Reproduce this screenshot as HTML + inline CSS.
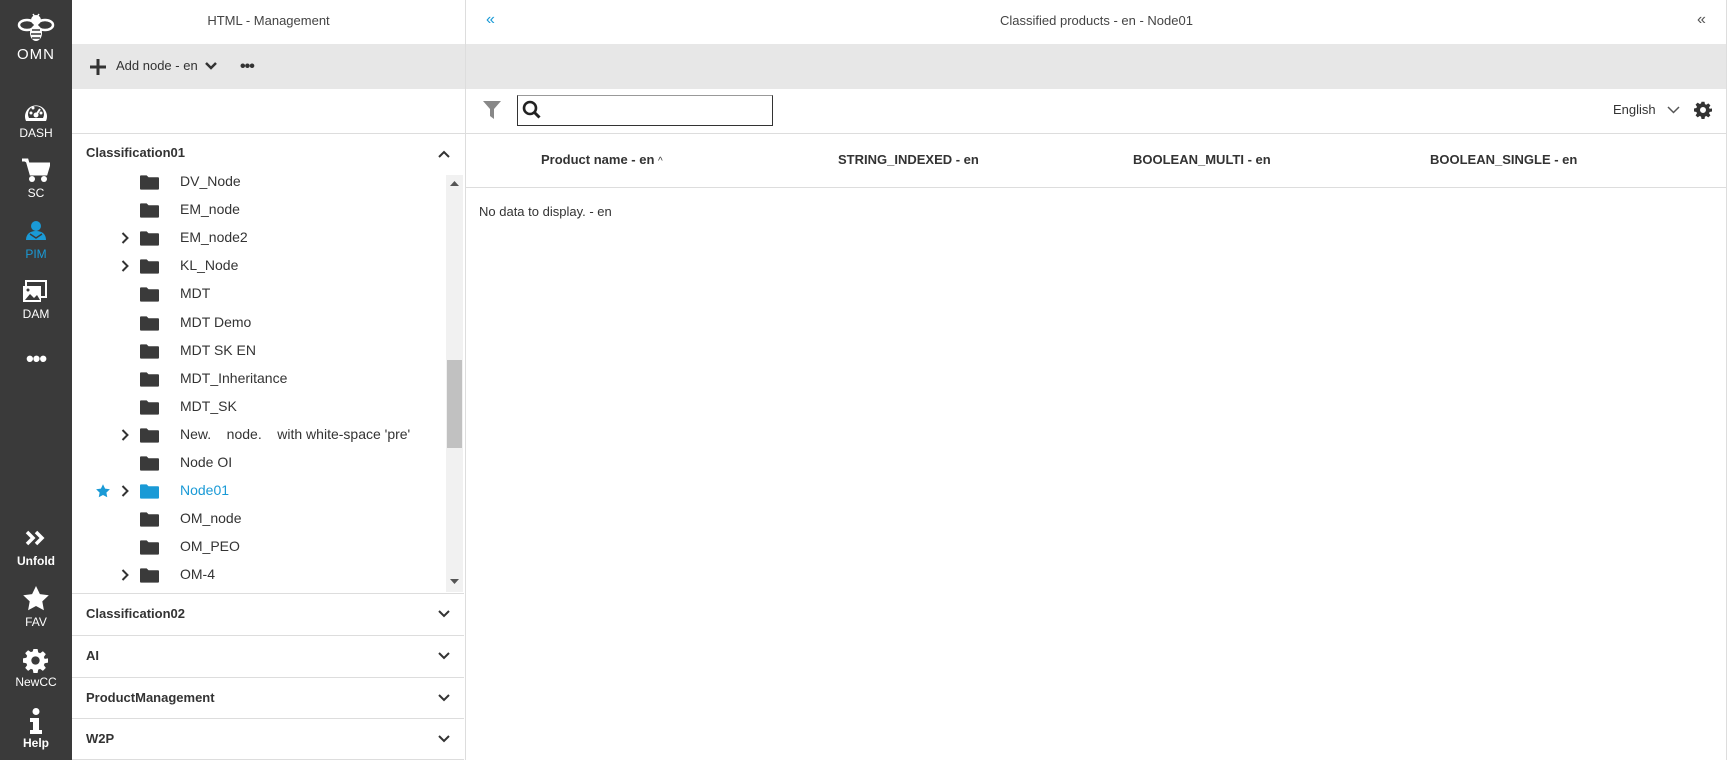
<!DOCTYPE html>
<html><head><style>
*{margin:0;padding:0;box-sizing:border-box}
body{width:1727px;height:760px;overflow:hidden;font-family:"Liberation Sans",sans-serif;background:#fff;position:relative;color:#333}
.abs{position:absolute}
#side{left:0;top:0;width:72px;height:760px;background:#3a3a3a}
.lbl{position:absolute;left:0;width:72px;text-align:center;color:#fff;font-size:12px}
.acc{position:absolute;left:72px;width:392px;border-top:1px solid #ddd;font-weight:bold;font-size:14px;color:#333}
</style></head><body>
<div id="side" class="abs"></div>
<svg width="0" height="0" style="position:absolute"><defs><symbol id="gear" viewBox="0 0 24 24"><path fill="currentColor" d="M10 1h4l.6 3.2 1.8.8 2.7-1.9 2.8 2.8-1.9 2.7.8 1.8L24 10v4l-3.2.6-.8 1.8 1.9 2.7-2.8 2.8-2.7-1.9-1.8.8L14 24h-4l-.6-3.2-1.8-.8-2.7 1.9-2.8-2.8 1.9-2.7-.8-1.8L0 14v-4l3.2-.6.8-1.8-1.9-2.7 2.8-2.8 2.7 1.9 1.8-.8zM12 8a4 4 0 1 0 0 8 4 4 0 1 0 0-8z"/></symbol></defs></svg>
<svg class="abs" style="left:17px;top:13px" width="38" height="32" viewBox="0 0 38 32"><g fill="#fff"><circle cx="19" cy="7" r="5"/><ellipse cx="10" cy="12" rx="8" ry="5" fill="none" stroke="#fff" stroke-width="2.5"/><ellipse cx="28" cy="12" rx="8" ry="5" fill="none" stroke="#fff" stroke-width="2.5"/><ellipse cx="19" cy="20" rx="6" ry="8"/><path d="M15 17h8M14 21h10M15 25h8" stroke="#3a3a3a" stroke-width="1.5"/><path d="M16 1l2 3M22 1l-2 3" stroke="#fff" stroke-width="1.5"/></g></svg>
<div class="lbl" style="top:46px;font-size:15px;letter-spacing:1px">OMN</div>
<svg class="abs" style="left:23px;top:100px" width="26" height="22" viewBox="0 0 26 22"><path d="M3 21 A11 11 0 1 1 23 21 Z" fill="#fff"/><path d="M6 18 A8 8 0 1 1 20 18 Z" fill="#3a3a3a"/><circle cx="13" cy="15" r="2.5" fill="#fff"/><path d="M13 15l4-6" stroke="#fff" stroke-width="2"/><circle cx="8" cy="13" r="1.5" fill="#fff"/><circle cx="10" cy="8" r="1.5" fill="#fff"/><circle cx="18" cy="13" r="1.5" fill="#fff"/></svg>
<div class="lbl" style="top:126px">DASH</div>
<svg class="abs" style="left:22px;top:158px" width="28" height="25" viewBox="0 0 28 25"><path d="M0 2h5l4 14h15l3-10H7" fill="#fff" stroke="#fff" stroke-width="3"/><circle cx="10" cy="21" r="3" fill="#fff"/><circle cx="22" cy="21" r="3" fill="#fff"/></svg>
<div class="lbl" style="top:186px">SC</div>
<svg class="abs" style="left:24px;top:220px" width="24" height="22" viewBox="0 0 24 22"><circle cx="12" cy="6" r="5" fill="#1a9ad6"/><path d="M2 20c0-6 4-9 10-9s10 3 10 9z" fill="#1a9ad6"/><path d="M6 14l6 4 6-4" stroke="#3a3a3a" stroke-width="1.5" fill="none"/></svg>
<div class="lbl" style="top:247px;color:#1a9ad6">PIM</div>
<svg class="abs" style="left:22px;top:280px" width="26" height="24" viewBox="0 0 26 24"><rect x="4" y="1" width="20" height="16" fill="none" stroke="#fff" stroke-width="2"/><rect x="1" y="6" width="18" height="16" fill="#fff"/><path d="M3 20l5-6 4 4 3-3 3 5z" fill="#3a3a3a"/><circle cx="6" cy="10" r="1.5" fill="#3a3a3a"/></svg>
<div class="lbl" style="top:307px">DAM</div>
<div class="lbl" style="top:346px;font-size:22px;font-weight:bold;letter-spacing:-1px">•••</div>
<svg class="abs" style="left:25px;top:530px" width="22" height="16" viewBox="0 0 22 16"><path d="M2 2l6 6-6 6M11 2l6 6-6 6" stroke="#fff" stroke-width="3.5" fill="none"/></svg>
<div class="lbl" style="top:554px;font-weight:bold">Unfold</div>
<svg class="abs" style="left:23px;top:586px" width="26" height="25" viewBox="0 0 24 23"><path d="M12 0l3.6 7.5 8.2 1-6 5.7 1.5 8.1L12 18.4l-7.3 3.9 1.5-8.1-6-5.7 8.2-1z" fill="#fff"/></svg>
<div class="lbl" style="top:615px">FAV</div>
<svg class="abs" style="left:23px;top:648px;color:#fff" width="25" height="25"><use href="#gear"/></svg>
<div class="lbl" style="top:675px">NewCC</div>
<svg class="abs" style="left:29px;top:708px" width="14" height="26" viewBox="0 0 14 26"><circle cx="7" cy="3.5" r="3.5" fill="#fff"/><path d="M1 10h9v12h3v4H1v-4h3v-8H1z" fill="#fff"/></svg>
<div class="lbl" style="top:736px;font-weight:bold">Help</div>

<div class="abs" style="left:72px;top:0;width:393px;height:44px;text-align:center;line-height:42px;font-size:13px;color:#444">HTML - Management</div>
<div class="abs" style="left:72px;top:44px;width:393px;height:45px;background:#e7e7e7"></div>
<svg class="abs" style="left:90px;top:59px" width="16" height="16"><path d="M8 0v16M0 8h16" stroke="#333" stroke-width="3"/></svg>
<div class="abs" style="left:116px;top:58px;font-size:13px;color:#333">Add node - en</div>
<svg class="abs" style="left:205px;top:62px" width="12" height="8"><path d="M1 1l5 5 5-5" stroke="#333" stroke-width="2.5" fill="none"/></svg>
<div class="abs" style="left:240px;top:58px;font-size:16px;font-weight:bold;letter-spacing:-1px">•••</div>
<div class="abs" style="left:72px;top:133px;width:393px;border-top:1px solid #ddd"></div>
<div class="abs" style="left:465px;top:0;width:1px;height:760px;background:#ddd"></div>
<div class="abs" style="left:86px;top:145px;font-weight:bold;font-size:13px">Classification01</div>
<svg class="abs" style="left:438px;top:150px" width="12" height="8"><path d="M1 7l5-5 5 5" stroke="#333" stroke-width="2" fill="none"/></svg>
<div class="abs" style="left:446px;top:175px;width:17px;height:417px;background:#f1f1f1"></div>
<div class="abs" style="left:447px;top:360px;width:15px;height:88px;background:#c1c1c1"></div>
<svg class="abs" style="left:450px;top:181px" width="9" height="5"><path d="M0 5l4.5-5 4.5 5z" fill="#555"/></svg>
<svg class="abs" style="left:450px;top:579px" width="9" height="5"><path d="M0 0l4.5 5 4.5-5z" fill="#555"/></svg>

<div id="tree"></div>
<script>
var items=[["DV_Node",0],["EM_node",0],["EM_node2",1],["KL_Node",1],["MDT",0],["MDT Demo",0],["MDT SK EN",0],["MDT_Inheritance",0],["MDT_SK",0],["New.&nbsp;&nbsp;&nbsp;&nbsp;node.&nbsp;&nbsp;&nbsp;&nbsp;with white-space 'pre'",1],["Node OI",0],["Node01",2],["OM_node",0],["OM_PEO",0],["OM-4",1]];
var h="";
items.forEach(function(it,i){var y=182+i*28.1;var c=it[1]==2?"#1a9ad6":"#3a3a3a";
h+='<svg class="abs" style="left:140px;top:'+(y-7)+'px" width="19" height="15" viewBox="0 0 20 15"><path d="M0 1q0-1 1-1h6l2 2h10q1 0 1 1v11q0 1-1 1H1q-1 0-1-1z" fill="'+c+'"/></svg>';
if(it[1])h+='<svg class="abs" style="left:121px;top:'+(y-6)+'px" width="9" height="12"><path d="M1.5 1l5 5-5 5" stroke="#333" stroke-width="2" fill="none"/></svg>';
if(it[1]==2)h+='<svg class="abs" style="left:96px;top:'+(y-7)+'px" width="14" height="14" viewBox="0 0 24 23"><path d="M12 0l3.6 7.5 8.2 1-6 5.7 1.5 8.1L12 18.4l-7.3 3.9 1.5-8.1-6-5.7 8.2-1z" fill="#1a9ad6"/></svg>';
h+='<div class="abs" style="left:180px;top:'+(y-9)+'px;font-size:14px;color:'+(it[1]==2?"#1a9ad6":"#333")+';white-space:pre">'+it[0]+'</div>';});
document.getElementById("tree").innerHTML=h;
</script>
<div class="acc" style="top:593px;height:42px;line-height:40px;padding-left:14px;font-size:13px">Classification02</div>
<div class="acc" style="top:635px;height:42px;line-height:40px;padding-left:14px;font-size:13px">AI</div>
<div class="acc" style="top:677px;height:41px;line-height:40px;padding-left:14px;font-size:13px">ProductManagement</div>
<div class="acc" style="top:718px;height:42px;line-height:40px;padding-left:14px;font-size:13px;border-bottom:1px solid #ddd">W2P</div>
<svg class="abs" style="left:438px;top:610px" width="12" height="8"><path d="M1 1l5 5 5-5" stroke="#333" stroke-width="2" fill="none"/></svg>
<svg class="abs" style="left:438px;top:652px" width="12" height="8"><path d="M1 1l5 5 5-5" stroke="#333" stroke-width="2" fill="none"/></svg>
<svg class="abs" style="left:438px;top:694px" width="12" height="8"><path d="M1 1l5 5 5-5" stroke="#333" stroke-width="2" fill="none"/></svg>
<svg class="abs" style="left:438px;top:735px" width="12" height="8"><path d="M1 1l5 5 5-5" stroke="#333" stroke-width="2" fill="none"/></svg>

<div class="abs" style="left:486px;top:11px;font-size:16px;color:#1a9ad6">«</div>
<div class="abs" style="left:466px;top:0;width:1261px;height:44px;text-align:center;line-height:42px;font-size:13px;color:#444">Classified products - en - Node01</div>
<div class="abs" style="left:1697px;top:11px;font-size:16px;color:#555">«</div>
<div class="abs" style="left:466px;top:44px;width:1261px;height:45px;background:#e7e7e7"></div>
<div class="abs" style="left:1726px;top:0;width:1px;height:760px;background:#ddd"></div>
<svg class="abs" style="left:483px;top:101px" width="18" height="18" viewBox="0 0 18 18"><path d="M0 0h18l-7 8v10l-4-3V8z" fill="#888"/></svg>
<div class="abs" style="left:517px;top:95px;width:256px;height:31px;border:1px solid #333;border-top-color:#999"></div>
<svg class="abs" style="left:522px;top:100px" width="20" height="20" viewBox="0 0 20 20"><circle cx="8" cy="8" r="6" stroke="#222" stroke-width="2.6" fill="none"/><path d="M12.5 12.5l5 5" stroke="#222" stroke-width="3"/></svg>
<div class="abs" style="left:1613px;top:102px;font-size:13px;color:#333">English</div>
<svg class="abs" style="left:1667px;top:106px" width="13" height="8"><path d="M1 1l5.5 5.5 5.5-5.5" stroke="#555" stroke-width="1.5" fill="none"/></svg>
<svg class="abs" style="left:1694px;top:101px;color:#333" width="18" height="18"><use href="#gear"/></svg>
<div class="abs" style="left:466px;top:133px;width:1261px;border-top:1px solid #ddd"></div>
<div class="abs" style="left:466px;top:187px;width:1261px;border-top:1px solid #ddd"></div>
<div class="abs" style="left:541px;top:152px;font-size:13px;font-weight:bold">Product name - en <span style="font-weight:normal;font-size:10px">^</span></div>
<div class="abs" style="left:838px;top:152px;font-size:13px;font-weight:bold">STRING_INDEXED - en</div>
<div class="abs" style="left:1133px;top:152px;font-size:13px;font-weight:bold">BOOLEAN_MULTI - en</div>
<div class="abs" style="left:1430px;top:152px;font-size:13px;font-weight:bold">BOOLEAN_SINGLE - en</div>
<div class="abs" style="left:479px;top:204px;font-size:13px">No data to display. - en</div>
</body></html>
